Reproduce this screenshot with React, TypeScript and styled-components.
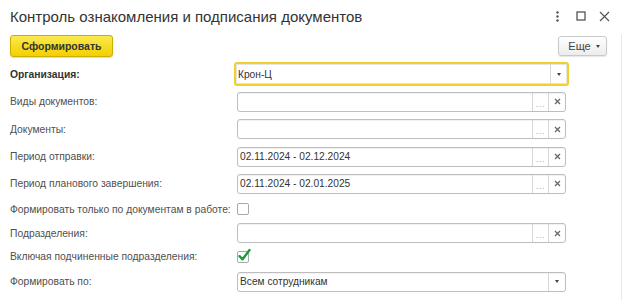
import React from "react";
import styled, { createGlobalStyle } from "styled-components";

const GlobalStyle = createGlobalStyle`
  html, body { margin: 0; padding: 0; background: #ffffff; }
  body { font-family: "Liberation Sans", Arial, sans-serif; }
  * { box-sizing: border-box; }
`;

const Window = styled.div`
  width: 623px;
  height: 300px;
  background: #fff;
  overflow: hidden;
  display: flex;
  flex-direction: column;
  font-family: "Liberation Sans", Arial, sans-serif;
`;

const Header = styled.div`
  height: 34px;
  display: flex;
  align-items: center;
  justify-content: space-between;
  padding: 0 10px 2px 10px;
`;

const Title = styled.h1`
  margin: 0;
  font-size: 15px;
  font-weight: normal;
  color: #333;
`;

const Controls = styled.div`
  display: flex;
  align-items: center;
  color: #555;
  margin-right: 3px;
`;

const Body = styled.div`
  flex: 1;
  border-right: 1px solid #e8e8e8;
  margin-right: 1px;
  padding: 0 0 0 10px;
  display: flex;
  flex-direction: column;
`;

const Toolbar = styled.div`
  height: 24px;
  display: flex;
  align-items: center;
  justify-content: space-between;
  padding-right: 14px;
`;

const PrimaryButton = styled.button`
  height: 22px;
  width: 103px;
  border: 1px solid #cfac00;
  border-radius: 3px;
  background: linear-gradient(#fbe94f, #f2d000);
  color: #333;
  font-family: "Liberation Sans", Arial, sans-serif;
  font-size: 10.5px;
  font-weight: bold;
  padding: 0;
  box-shadow: 0 1px 1px rgba(0, 0, 0, 0.15);
`;

const MoreButton = styled.button`
  height: 20px;
  width: 49px;
  border: 1px solid #c9c9c9;
  border-radius: 3px;
  background: linear-gradient(#ffffff, #ececec);
  color: #444;
  font-family: "Liberation Sans", Arial, sans-serif;
  font-size: 11px;
  padding: 0 0 0 3px;
  display: flex;
  align-items: center;
  justify-content: center;
  gap: 5px;
  box-shadow: 0 1px 1px rgba(0, 0, 0, 0.1);
`;

const Caret = styled.span`
  width: 0;
  height: 0;
  border-left: 2.5px solid transparent;
  border-right: 2.5px solid transparent;
  border-top: 3px solid #444;
`;

const Form = styled.div`
  display: flex;
  flex-direction: column;
  padding-top: 2px;
`;

const Row = styled.div<{ $h: number }>`
  height: ${(p) => p.$h}px;
  display: grid;
  grid-template-columns: 227px 1fr;
  align-items: center;
`;

const Label = styled.span<{ $bold?: boolean }>`
  font-size: 10.3px;
  color: ${(p) => (p.$bold ? "#333" : "#4f4f4f")};
  font-weight: ${(p) => (p.$bold ? "bold" : "normal")};
  white-space: nowrap;
`;

const Field = styled.div<{ $focused?: boolean }>`
  width: ${(p) => (p.$focused ? "335px" : "329px")};
  height: ${(p) => (p.$focused ? "24px" : "20px")};
  margin-left: ${(p) => (p.$focused ? "-3px" : "0")};
  border: ${(p) => (p.$focused ? "2px solid #f3cf2e" : "1px solid #bdbdbd")};
  border-radius: 3px;
  display: flex;
  align-items: stretch;
  background: #fff;
  box-shadow: ${(p) =>
    p.$focused ? "inset 0 0 0 1px #e5e5e5" : "inset 0 1px 1px rgba(0,0,0,0.06)"};
`;

const FieldText = styled.div`
  flex: 1;
  display: flex;
  align-items: center;
  padding-left: 2px;
  font-size: 10.2px;
  color: #333;
  white-space: nowrap;
  overflow: hidden;
`;

const FieldButton = styled.div<{ $w: number }>`
  width: ${(p) => p.$w}px;
  border-left: 1px solid #d6d6d6;
  display: flex;
  align-items: center;
  justify-content: center;
  color: #888;
  font-size: 10px;
`;

const Dots = styled.span`
  color: #aaa;
  font-size: 9px;
  letter-spacing: 0.5px;
  margin-top: 4px;
`;

const Box = styled.div`
  position: relative;
  width: 12px;
  height: 12px;
  border: 1px solid #a9a9a9;
  border-radius: 2px;
  background: #fff;
`;

const CheckMark = styled.svg`
  position: absolute;
  left: 0px;
  top: -4px;
`;

const Check = ({ checked }: { checked?: boolean }) => (
  <Box>
    {checked && (
      <CheckMark width="13" height="14" viewBox="0 0 13 14">
        <path d="M1.5 8.2 L4.6 11.3 L11.5 2" stroke="#1d9a3c" strokeWidth="2.4" fill="none" strokeLinecap="round" strokeLinejoin="round" />
      </CheckMark>
    )}
  </Box>
);

const Picker = () => (
  <>
    <FieldButton $w={16}>
      <Dots>...</Dots>
    </FieldButton>
    <FieldButton $w={17}>
      <svg width="7" height="7" viewBox="0 0 7 7">
        <path d="M1 1 L6 6 M6 1 L1 6" stroke="#666" strokeWidth="1.3" />
      </svg>
    </FieldButton>
  </>
);

const Drop = () => (
  <FieldButton $w={17}>
    <Caret />
  </FieldButton>
);

export default function App() {
  return (
    <Window>
      <GlobalStyle />
      <Header>
        <Title>Контроль ознакомления и подписания документов</Title>
        <Controls>
          <svg width="3" height="11" viewBox="0 0 3 11">
            <circle cx="1.5" cy="1.5" r="1.2" fill="#555" />
            <circle cx="1.5" cy="5.5" r="1.2" fill="#555" />
            <circle cx="1.5" cy="9.5" r="1.2" fill="#555" />
          </svg>
          <svg width="10" height="10" viewBox="0 0 10 10" style={{ marginLeft: 17 }}>
            <rect x="1" y="1" width="8" height="8" fill="none" stroke="#555" strokeWidth="1.3" />
          </svg>
          <svg width="11" height="11" viewBox="0 0 11 11" style={{ marginLeft: 13 }}>
            <path d="M1 1 L10 10 M10 1 L1 10" stroke="#555" strokeWidth="1.2" />
          </svg>
        </Controls>
      </Header>
      <Body>
        <Toolbar>
          <PrimaryButton>Сформировать</PrimaryButton>
          <MoreButton>
            Еще <Caret />
          </MoreButton>
        </Toolbar>
        <Form>
          <Row $h={28}>
            <Label $bold>Организация:</Label>
            <Field $focused>
              <FieldText>Крон-Ц</FieldText>
              <Drop />
            </Field>
          </Row>
          <Row $h={27}>
            <Label>Виды документов:</Label>
            <Field>
              <FieldText />
              <Picker />
            </Field>
          </Row>
          <Row $h={28}>
            <Label>Документы:</Label>
            <Field>
              <FieldText />
              <Picker />
            </Field>
          </Row>
          <Row $h={27}>
            <Label>Период отправки:</Label>
            <Field>
              <FieldText>02.11.2024 - 02.12.2024</FieldText>
              <Picker />
            </Field>
          </Row>
          <Row $h={27}>
            <Label>Период планового завершения:</Label>
            <Field>
              <FieldText>02.11.2024 - 02.01.2025</FieldText>
              <Picker />
            </Field>
          </Row>
          <Row $h={24}>
            <Label>Формировать только по документам в работе:</Label>
            <Check />
          </Row>
          <Row $h={24}>
            <Label>Подразделения:</Label>
            <Field>
              <FieldText />
              <Picker />
            </Field>
          </Row>
          <Row $h={23}>
            <Label>Включая подчиненные подразделения:</Label>
            <Check checked />
          </Row>
          <Row $h={27}>
            <Label>Формировать по:</Label>
            <Field>
              <FieldText>Всем сотрудникам</FieldText>
              <Drop />
            </Field>
          </Row>
        </Form>
      </Body>
    </Window>
  );
}
